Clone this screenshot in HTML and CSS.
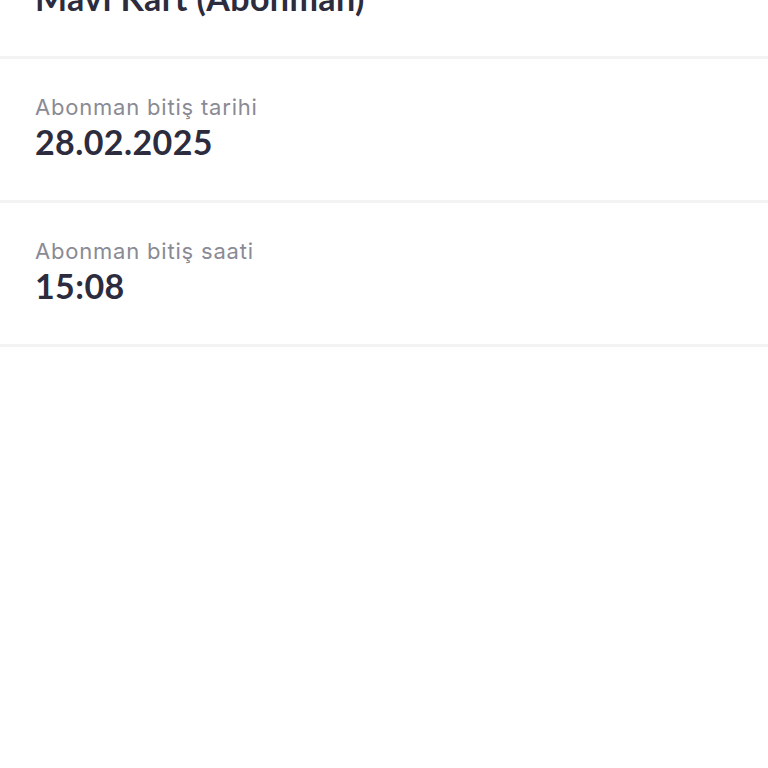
FILE: index.html
```html
<!DOCTYPE html>
<html lang="tr">
<head>
<meta charset="utf-8">
<link rel="stylesheet" href="styles.css">
</head>
<body>
<div class="list">
  <div class="row">
    <div class="label">Kart tipi</div>
    <div class="value">Mavi Kart (Abonman)</div>
  </div>
  <div class="row">
    <div class="label">Abonman bitiş tarihi</div>
    <div class="value">28.02.2025</div>
  </div>
  <div class="row">
    <div class="label">Abonman bitiş saati</div>
    <div class="value">15:08</div>
  </div>
</div>
</body>
</html>
```
FILE: styles.css
```css
html, body {
  margin: 0;
  padding: 0;
  background: #ffffff;
}
body {
  font-family: Inter, "Noto Sans", sans-serif;
  width: 768px;
  height: 768px;
  overflow: hidden;
}
.list {
  margin-top: -85px;
}
.row {
  padding: 34px 35px 38px;
  border-bottom: 3px solid #f3f3f4;
}
.label {
  font-size: 22px;
  line-height: 28px;
  letter-spacing: 0.8px;
  color: #8a8a95;
  font-weight: 400;
}
.value {
  margin-top: 1px;
  font-family: Lato, "Noto Sans", sans-serif;
  font-size: 34px;
  line-height: 40px;
  letter-spacing: 0.4px;
  color: #2c2c3e;
  font-weight: 700;
}
```
